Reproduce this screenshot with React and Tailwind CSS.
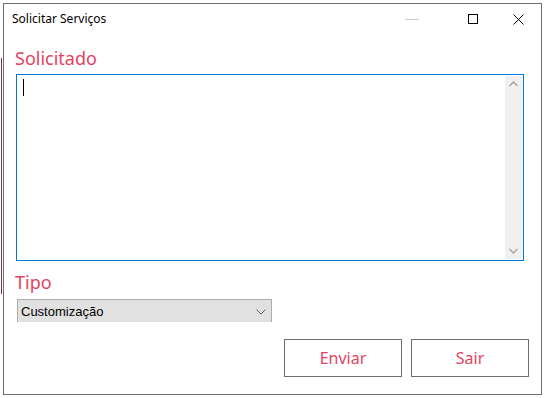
export default function App() {
  const pink = "text-[#e2445f]";
  return (
    <div className="relative w-[544px] h-[398px] bg-white p-[3px]">
      <div className="absolute left-[1px] top-[58px] h-[236px] w-[1px] bg-[#6b3a4a]" />
      <div className="flex flex-col w-[539px] h-[392px] border border-[#6e6e6e] bg-white">
        {/* title bar */}
        <div
          className="flex items-center h-[30px] pl-[8px] text-[12px] text-black"
          style={{ fontFamily: '"Noto Sans", sans-serif' }}
        >
          <span className="flex-1">Solicitar Serviços</span>
          <div className="flex items-center pr-[17px]">
            <div className="w-[14px] h-[1px] bg-[#c8c8c8]" />
            <div className="ml-[49px] w-[10px] h-[10px] border border-black" />
            <svg
              className="ml-[35px]"
              width="11"
              height="11"
              viewBox="0 0 11 11"
              fill="none"
              stroke="black"
              strokeWidth="1"
            >
              <path d="M0.5 0.5L10.5 10.5M10.5 0.5L0.5 10.5" />
            </svg>
          </div>
        </div>

        {/* content */}
        <div
          className="flex flex-col flex-1"
          style={{ fontFamily: '"Noto Sans", sans-serif' }}
        >
          <div className={`ml-[11px] mt-[11px] h-[26px] leading-[26px] text-[18px] ${pink}`}>
            Solicitado
          </div>
          <div className="ml-[12px] mt-[3px] w-[508px] h-[187px] border border-[#0078d7] p-[1px] flex">
            <div className="flex-1 pl-[5px] pt-[3px]">
              <div className="w-[1px] h-[17px] bg-black" />
            </div>
            <div className="w-[17px] bg-[#f0f0f0] flex flex-col items-center justify-between py-[5px]">
              <svg width="9" height="6" viewBox="0 0 9 6" fill="none" stroke="#a3a3a3" strokeWidth="1.4">
                <path d="M0.5 5L4.5 1L8.5 5" />
              </svg>
              <svg width="9" height="6" viewBox="0 0 9 6" fill="none" stroke="#a3a3a3" strokeWidth="1.4">
                <path d="M0.5 1L4.5 5L8.5 1" />
              </svg>
            </div>
          </div>

          <div className={`ml-[11px] mt-[8px] h-[26px] leading-[26px] text-[18px] ${pink}`}>
            Tipo
          </div>
          <div
            className="ml-[13px] mt-[4px] w-[255px] h-[23px] bg-[#e1e1e1] border-t border-l border-r border-[#adadad] flex items-center pl-[3px] pr-[5px] pt-[2px] text-[13px] text-black"
            style={{ fontFamily: '"Liberation Sans", Arial, sans-serif' }}
          >
            <span className="flex-1">Customização</span>
            <svg width="10" height="6" viewBox="0 0 10 6" fill="none" stroke="#606060" strokeWidth="1">
              <path d="M0.5 0.5L5 5L9.5 0.5" />
            </svg>
          </div>

          <div className="flex justify-end gap-[9px] mt-[17px] pr-[12px]">
            <button className={`w-[118px] h-[38px] border border-[#6e6e6e] bg-white text-[16px] ${pink}`}>
              Enviar
            </button>
            <button className={`w-[118px] h-[38px] border border-[#6e6e6e] bg-white text-[16px] ${pink}`}>
              Sair
            </button>
          </div>
        </div>
      </div>
    </div>
  );
}
